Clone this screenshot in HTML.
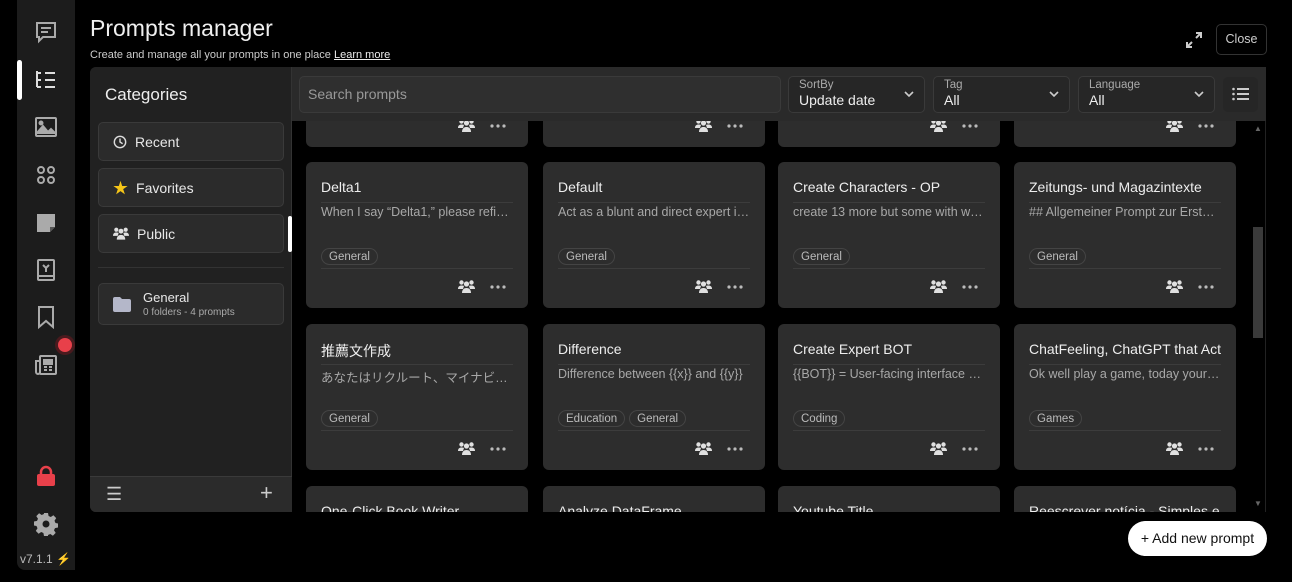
<!DOCTYPE html>
<html><head><meta charset="utf-8"><style>
*{box-sizing:border-box;margin:0;padding:0}
html,body{width:1292px;height:582px;overflow:hidden}
body{background:#000;font-family:"Liberation Sans","Noto Sans CJK JP",sans-serif;color:#e8e8e8;position:relative}
.abs{position:absolute}
.side{left:17px;top:0;width:58px;height:570px;background:#1c1c1c;border-radius:0 0 0 8px}
.ic{position:absolute;left:34px;width:24px;height:24px}
.panel{left:90px;top:67px;width:1176px;height:445px;background:#222;border-radius:6px;overflow:hidden}
.cat{position:absolute;left:98px;width:186px;height:39px;background:#2b2b2b;border:1px solid #3a3a3a;border-radius:5px;font-size:14px;display:flex;align-items:center;padding-left:14px;gap:8px}
.grid{left:292px;top:121px;width:958px;height:391px;overflow:hidden;background:#000}
.card{position:absolute;width:222px;height:146px;background:#2d2d2d;border-radius:6px}
.card .t{position:absolute;left:15px;top:17px;right:15px;font-size:14px;color:#eee;white-space:nowrap;overflow:hidden;height:24px;border-bottom:1px solid #3c3c3c}
.card .d{position:absolute;left:15px;top:43px;right:15px;font-size:12.5px;color:#a8a8a8;white-space:nowrap;overflow:hidden;text-overflow:ellipsis}
.card .tags{position:absolute;left:15px;top:86px;right:15px;height:21px;border-bottom:1px solid #3c3c3c;display:flex;gap:4px}
.tag{font-size:11.5px;color:#bbb;border:1px solid #444;border-radius:9px;padding:1px 7px;height:17px;line-height:14px}
.card .ppl{position:absolute;left:152px;top:118px}
.card .dots{position:absolute;left:184px;top:123px}
.sel{position:absolute;top:76px;height:37px;background:#262626;border:1px solid #3a3a3a;border-radius:5px;padding:2px 10px}
.sel .l{font-size:11.5px;color:#aaa}
.sel .v{font-size:14px;color:#eee;margin-top:1px}
.sel svg{position:absolute;right:9px;top:13px}
</style></head><body>
<svg width="0" height="0" style="position:absolute"><defs>
<g id="ppl" fill="#e0e0e0"><circle cx="3.5" cy="2.5" r="2.2"/><circle cx="13.5" cy="2.5" r="2.2"/><circle cx="8.5" cy="4" r="2.6"/><path d="M0 9c0-2.5 1.5-3.5 3.5-3.5S6 6 6 6L5 9z"/><path d="M17 9c0-2.5-1.5-3.5-3.5-3.5S11 6 11 6l1 3z"/><path d="M4 13c0-3.5 2-5 4.5-5S13 9.5 13 13z"/></g>
<g id="dots" fill="#bbb"><circle cx="2" cy="2" r="1.6"/><circle cx="8" cy="2" r="1.6"/><circle cx="14" cy="2" r="1.6"/></g>
</defs></svg>

<div class="abs side"></div>
<div class="abs" style="left:17px;top:60px;width:5px;height:40px;background:#fff;border-radius:3px"></div>
<svg class="ic" style="top:20px" viewBox="0 0 24 24" fill="none" stroke="#aaa" stroke-width="2"><path d="M3 3h18v14H9l-4 4v-4H3z"/><path d="M7 8h10M7 12h7"/></svg>
<svg class="ic" style="top:68px" viewBox="0 0 24 24" fill="none" stroke="#ddd" stroke-width="2"><path d="M3 3v16M3 5h4M3 12h4M3 19h4M11 5h10M11 12h10M11 19h10"/></svg>
<svg class="ic" style="top:115px" viewBox="0 0 24 24" fill="none" stroke="#aaa" stroke-width="2"><rect x="2" y="3" width="20" height="18" rx="1"/><path d="M2 19l7-8 5 6 3-3 5 5" fill="#aaa"/><circle cx="7" cy="8" r="1.5" fill="#aaa"/></svg>
<svg class="ic" style="top:163px" viewBox="0 0 24 24" fill="none" stroke="#aaa" stroke-width="2"><circle cx="7" cy="7" r="3"/><circle cx="17" cy="7" r="3"/><circle cx="7" cy="17" r="3"/><circle cx="17" cy="17" r="3"/></svg>
<svg class="ic" style="top:211px" viewBox="0 0 24 24"><path d="M3 3h18v13l-5 5H3z" fill="#aaa"/><path d="M16 21v-5h5" fill="#555"/></svg>
<svg class="ic" style="top:258px" viewBox="0 0 24 24" fill="none" stroke="#aaa" stroke-width="2"><rect x="4" y="2" width="16" height="20" rx="1"/><path d="M4 18h16M9 7l3 3 3-3M12 10v4"/></svg>
<svg class="ic" style="top:305px" viewBox="0 0 24 24" fill="none" stroke="#aaa" stroke-width="2"><path d="M5 2h14v20l-7-6-7 6z"/></svg>
<div class="abs" style="left:58px;top:338px;width:14px;height:14px;border-radius:50%;background:#e8404a;box-shadow:0 0 0 3px #4a1a1e"></div>
<svg class="ic" style="top:353px" viewBox="0 0 24 24" fill="none" stroke="#aaa" stroke-width="2"><rect x="6" y="3" width="16" height="18" rx="1"/><path d="M6 8H2v11a2 2 0 0 0 4 0"/><rect x="10" y="7" width="8" height="4" fill="#aaa"/><path d="M10 14h3M15 14h3M10 17h3M15 17h3"/></svg>
<svg class="ic" style="top:464px" viewBox="0 0 24 24"><path d="M7 11V8a5 5 0 0 1 10 0v3" fill="none" stroke="#e8404a" stroke-width="2.5"/><rect x="3" y="10" width="18" height="12" rx="2" fill="#e8404a"/></svg>
<svg class="ic" style="top:512px" viewBox="0 0 24 24"><path fill="#aaa" d="M10 1h4l.6 3 2.2 1 2.6-1.7 2.8 2.8L20.5 8.7l1 2.3 2.5.5v4l-3 .6-1 2.2 1.7 2.6-2.8 2.8-2.6-1.7-2.3 1L14 24h-4l-.6-3-2.2-1-2.6 1.7-2.8-2.8 1.7-2.6-1-2.3L0 13.5v-4l3-.6 1-2.2L2.3 4.1 5.1 1.3l2.6 1.7 2.2-1z"/><circle cx="12" cy="12" r="3.5" fill="#1c1c1c"/></svg>
<div class="abs" style="left:20px;top:552px;font-size:12px;color:#bbb">v7.1.1 <span style="color:#aaa">⚡</span></div>

<div class="abs" style="left:90px;top:15px;font-size:23px;color:#f0f0f0">Prompts manager</div>
<div class="abs" style="left:90px;top:49px;font-size:11px;color:#ccc">Create and manage all your prompts in one place <u style="color:#eee">Learn more</u></div>
<svg class="abs" style="left:1185px;top:31px" width="18" height="18" viewBox="0 0 18 18" fill="none" stroke="#ccc" stroke-width="2"><path d="M11 2h5v5M16 2l-5 5M7 16H2v-5M2 16l5-5"/></svg>
<div class="abs" style="left:1216px;top:24px;width:51px;height:31px;border:1px solid #333;border-radius:5px;font-size:12.5px;color:#ccc;text-align:center;line-height:29px">Close</div>

<div class="abs panel"></div>
<div class="abs" style="left:90px;top:67px;width:202px;height:445px;background:#212121;border-right:1px solid #333;border-radius:6px 0 0 6px"></div>
<div class="abs" style="left:105px;top:85px;font-size:17px;color:#eee">Categories</div>
<div class="cat" style="top:122px"><svg width="14" height="14" viewBox="0 0 16 16" fill="none" stroke="#ddd" stroke-width="1.6"><circle cx="8" cy="8" r="6.5"/><path d="M8 4v4l3 2"/></svg>Recent</div>
<div class="cat" style="top:168px"><span style="color:#f5c518;font-size:15px">★</span>Favorites</div>
<div class="cat" style="top:214px"><svg width="16" height="13" viewBox="0 0 17 13"><use href="#ppl"/></svg>Public</div>
<div class="abs" style="left:288px;top:216px;width:4px;height:36px;background:#fff;border-radius:2px"></div>
<div class="abs" style="left:98px;top:267px;width:186px;height:1px;background:#333"></div>
<div class="cat" style="top:283px;height:42px;align-items:center"><svg width="18" height="15" viewBox="0 0 18 15"><path d="M0 2a2 2 0 0 1 2-2h5l2 2h7a2 2 0 0 1 2 2v9a2 2 0 0 1-2 2H2a2 2 0 0 1-2-2z" fill="#b4b7c9"/></svg><div style="margin-left:4px"><div style="font-size:13px">General</div><div style="font-size:10px;color:#aaa;margin-top:2px">0 folders - 4 prompts</div></div></div>
<div class="abs" style="left:90px;top:476px;width:202px;height:36px;background:#2b2b2b;border-top:1px solid #3a3a3a;border-radius:0 0 0 6px"></div>
<div class="abs" style="left:106px;top:484px;font-size:18px;color:#ccc">☰</div>
<div class="abs" style="left:260px;top:480px;font-size:22px;color:#ccc">+</div>

<div class="abs" style="left:292px;top:67px;width:974px;height:54px;background:#2a2a2a"></div>
<div class="abs" style="left:299px;top:76px;width:482px;height:37px;background:#2f2f2f;border:1px solid #3a3a3a;border-radius:5px;font-size:14px;color:#999;padding:9px 8px">Search prompts</div>
<div class="sel" style="left:788px;width:137px"><div class="l">SortBy</div><div class="v">Update date</div><svg width="12" height="8" viewBox="0 0 12 8" fill="none" stroke="#ccc" stroke-width="1.6"><path d="M2 2l4 4 4-4"/></svg></div>
<div class="sel" style="left:933px;width:137px"><div class="l">Tag</div><div class="v">All</div><svg width="12" height="8" viewBox="0 0 12 8" fill="none" stroke="#ccc" stroke-width="1.6"><path d="M2 2l4 4 4-4"/></svg></div>
<div class="sel" style="left:1078px;width:137px"><div class="l">Language</div><div class="v">All</div><svg width="12" height="8" viewBox="0 0 12 8" fill="none" stroke="#ccc" stroke-width="1.6"><path d="M2 2l4 4 4-4"/></svg></div>
<div class="abs" style="left:1223px;top:77px;width:35px;height:35px;background:#262626;border-radius:5px"></div>
<svg class="abs" style="left:1232px;top:87px" width="17" height="14" viewBox="0 0 17 14" fill="#ccc"><circle cx="1.5" cy="2" r="1.3"/><circle cx="1.5" cy="7" r="1.3"/><circle cx="1.5" cy="12" r="1.3"/><rect x="5" y="1" width="12" height="2"/><rect x="5" y="6" width="12" height="2"/><rect x="5" y="11" width="12" height="2"/></svg>

<div class="abs grid">
<div class="card" style="left:14px;top:-120px"><div class="ppl"><svg width="17" height="13"><use href="#ppl"/></svg></div><svg class="dots" width="16" height="4"><use href="#dots"/></svg></div>
<div class="card" style="left:251px;top:-120px"><div class="ppl"><svg width="17" height="13"><use href="#ppl"/></svg></div><svg class="dots" width="16" height="4"><use href="#dots"/></svg></div>
<div class="card" style="left:486px;top:-120px"><div class="ppl"><svg width="17" height="13"><use href="#ppl"/></svg></div><svg class="dots" width="16" height="4"><use href="#dots"/></svg></div>
<div class="card" style="left:722px;top:-120px"><div class="ppl"><svg width="17" height="13"><use href="#ppl"/></svg></div><svg class="dots" width="16" height="4"><use href="#dots"/></svg></div>

<div class="card" style="left:14px;top:41px"><div class="t">Delta1</div><div class="d">When I say “Delta1,” please refine the text</div><div class="tags"><span class="tag">General</span></div><div class="ppl"><svg width="17" height="13"><use href="#ppl"/></svg></div><svg class="dots" width="16" height="4"><use href="#dots"/></svg></div>
<div class="card" style="left:251px;top:41px"><div class="t">Default</div><div class="d">Act as a blunt and direct expert in everything</div><div class="tags"><span class="tag">General</span></div><div class="ppl"><svg width="17" height="13"><use href="#ppl"/></svg></div><svg class="dots" width="16" height="4"><use href="#dots"/></svg></div>
<div class="card" style="left:486px;top:41px"><div class="t">Create Characters - OP</div><div class="d">create 13 more but some with weapons</div><div class="tags"><span class="tag">General</span></div><div class="ppl"><svg width="17" height="13"><use href="#ppl"/></svg></div><svg class="dots" width="16" height="4"><use href="#dots"/></svg></div>
<div class="card" style="left:722px;top:41px"><div class="t">Zeitungs- und Magazintexte</div><div class="d">## Allgemeiner Prompt zur Erstellung</div><div class="tags"><span class="tag">General</span></div><div class="ppl"><svg width="17" height="13"><use href="#ppl"/></svg></div><svg class="dots" width="16" height="4"><use href="#dots"/></svg></div>

<div class="card" style="left:14px;top:203px"><div class="t">推薦文作成</div><div class="d">あなたはリクルート、マイナビの担当者です</div><div class="tags"><span class="tag">General</span></div><div class="ppl"><svg width="17" height="13"><use href="#ppl"/></svg></div><svg class="dots" width="16" height="4"><use href="#dots"/></svg></div>
<div class="card" style="left:251px;top:203px"><div class="t">Difference</div><div class="d">Difference between {{x}} and {{y}}</div><div class="tags"><span class="tag">Education</span><span class="tag">General</span></div><div class="ppl"><svg width="17" height="13"><use href="#ppl"/></svg></div><svg class="dots" width="16" height="4"><use href="#dots"/></svg></div>
<div class="card" style="left:486px;top:203px"><div class="t">Create Expert BOT</div><div class="d">{{BOT}} = User-facing interface of the bot</div><div class="tags"><span class="tag">Coding</span></div><div class="ppl"><svg width="17" height="13"><use href="#ppl"/></svg></div><svg class="dots" width="16" height="4"><use href="#dots"/></svg></div>
<div class="card" style="left:722px;top:203px"><div class="t">ChatFeeling, ChatGPT that Act</div><div class="d">Ok well play a game, today your name is</div><div class="tags"><span class="tag">Games</span></div><div class="ppl"><svg width="17" height="13"><use href="#ppl"/></svg></div><svg class="dots" width="16" height="4"><use href="#dots"/></svg></div>

<div class="card" style="left:14px;top:365px"><div class="t">One-Click Book Writer</div></div>
<div class="card" style="left:251px;top:365px"><div class="t">Analyze DataFrame</div></div>
<div class="card" style="left:486px;top:365px"><div class="t">Youtube Title</div></div>
<div class="card" style="left:722px;top:365px"><div class="t">Reescrever notícia - Simples e</div></div>
</div>
<div class="abs" style="left:1250px;top:121px;width:16px;height:391px;background:#000;border-right:1px solid #222"></div>
<div class="abs" style="left:1253px;top:227px;width:10px;height:111px;background:#3a3a3a"></div>
<div class="abs" style="left:1254px;top:124px;font-size:8px;color:#666">▲</div>
<div class="abs" style="left:1254px;top:499px;font-size:8px;color:#666">▼</div>

<div class="abs" style="left:1128px;top:521px;width:139px;height:35px;background:#fff;border-radius:18px;color:#111;font-size:14px;text-align:center;line-height:35px">+ Add new prompt</div>
</body></html>
